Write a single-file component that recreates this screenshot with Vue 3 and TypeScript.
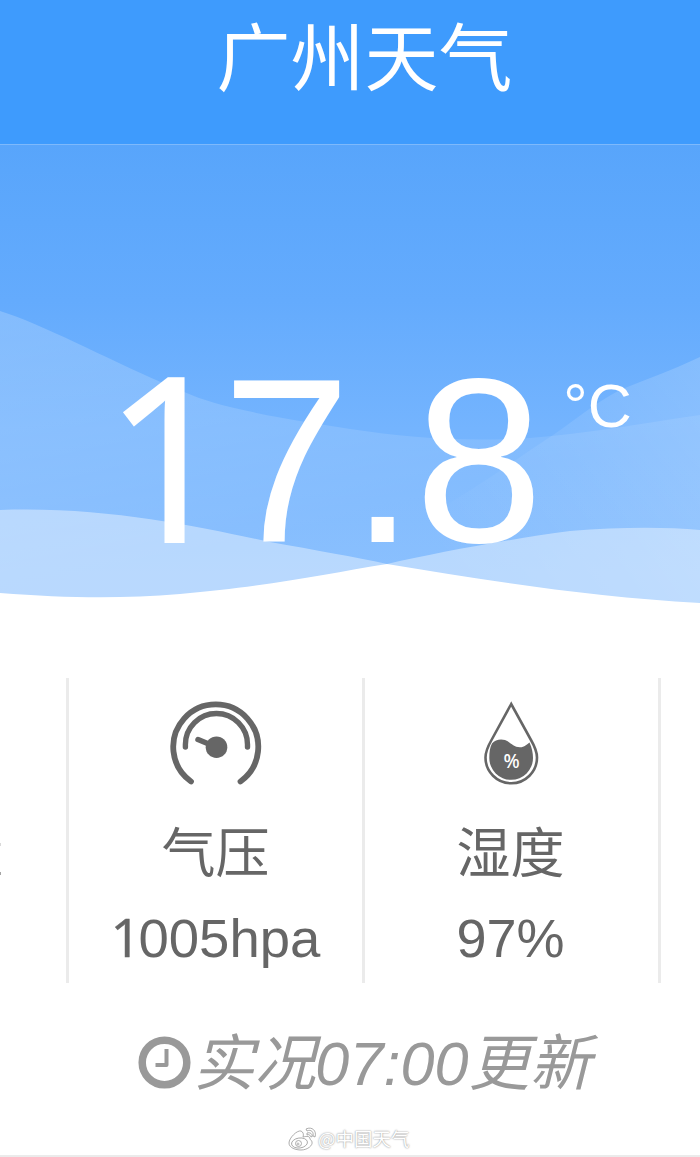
<script setup lang="ts">
interface Metric {
  id: 'pressure' | 'humidity'
  label: string
  lead: string
  value: string
}

const metrics: Metric[] = [
  { id: 'pressure', label: '气压', lead: '1', value: '005hpa' },
  { id: 'humidity', label: '湿度', lead: '', value: '97%' },
]
</script>

<template>
  <main class="page">
    <header class="bar">
      <h1>广州天气</h1>
    </header>

    <section class="hero">
      <svg class="waves" viewBox="0 144 700 476" aria-hidden="true">
        <defs>
          <linearGradient id="left" gradientUnits="userSpaceOnUse" x1="0" y1="311" x2="60" y2="580">
            <stop offset="0" stop-color="#fff" stop-opacity="0.2" />
            <stop offset="0.5" stop-color="#fff" stop-opacity="0.15" />
            <stop offset="1" stop-color="#fff" stop-opacity="0.08" />
          </linearGradient>
          <linearGradient id="right" gradientUnits="userSpaceOnUse" x1="700" y1="357" x2="430" y2="540">
            <stop offset="0" stop-color="#fff" stop-opacity="0.18" />
            <stop offset="0.5" stop-color="#fff" stop-opacity="0.08" />
            <stop offset="1" stop-color="#fff" stop-opacity="0" />
          </linearGradient>
        </defs>
        <path fill="url(#left)" d="M0 311C42 324 105 358 163 383C190 395 208 402 230 407C275 418 315 423 350 429C410 438 465 442 530 438C590 433 645 423 700 415V620H0Z" />
        <path fill="url(#right)" d="M700 357C670 371 645 380 620 390C590 406 570 424 550 437C500 470 440 514 387 535V620H700Z" />
        <path class="crest" d="M0 510C105 506 200 527 270 542C315 550 355 557 387 564L360 620H0Z" />
        <path class="crest" d="M387 564C440 552 510 539 570 531C620 527 665 527 700 530V620H400Z" />
        <path fill="#fff" d="M0 593C65 598 120 599 180 594C265 587 325 574 387 564C490 581 590 597 700 603V621H0Z" />
      </svg>
      <div class="reading">
        <span><span class="one">1</span>7.8</span>
        <span class="unit">°C</span>
      </div>
    </section>

    <section class="metrics">
      <div class="previous">量</div>
      <article v-for="m in metrics" :key="m.id" class="metric" :class="m.id">
        <svg v-if="m.id === 'pressure'" class="icon" viewBox="0 0 130 130" aria-hidden="true">
          <g fill="none" stroke="#666" stroke-linecap="round">
            <path stroke-width="5.8" d="M41 101.5A42.5 42.5 0 1 1 90.5 101.5" />
            <path stroke-width="5.4" d="M35.4 67V64.5A30.8 30.8 0 0 1 97.5 64.5V67" />
            <path stroke-width="5.5" d="M48 59.5L60 64.5" />
          </g>
          <circle cx="66.5" cy="67.2" r="10.8" fill="#666" />
        </svg>
        <svg v-else class="icon" viewBox="0 0 130 130" aria-hidden="true">
          <path fill="none" stroke="#666" stroke-width="2.6" d="M66.200 24L46.500 60C42.500 67 40.500 72 40.500 77.500A25.700 25.700 0 0 0 92 77.500C92 72 90 67 86 60Z" />
          <path fill="#666" d="M47 63.500C50 60 55 58.600 60 60C65.500 62 68 67.300 75 67.300C79.500 67.300 82 64 84.500 62.500C87 68 88 73 88 78A21.800 21.800 0 0 1 44.300 78C44.300 72 45 67 47 63.500Z" />
          <text x="66.500" y="88" text-anchor="middle" class="percent">%</text>
        </svg>
        <h2>{{ m.label }}</h2>
        <p><span v-if="m.lead" class="one">{{ m.lead }}</span>{{ m.value }}</p>
      </article>
      <div class="next"></div>
    </section>

    <section class="updated">
      <svg class="clock" viewBox="0 0 53 53" aria-hidden="true">
        <circle cx="26.500" cy="26.500" r="22.300" fill="none" stroke="#999" stroke-width="7.500" />
        <path fill="none" stroke="#999" stroke-width="4" stroke-linejoin="round" d="M28.500 13V29H17.500" />
      </svg>
      <em>实况07:00更新</em>
    </section>

    <footer>
      <svg class="weibo" viewBox="0 0 30 26" fill="none" stroke="#999" aria-hidden="true">
        <path stroke-width="0.800" d="M13 6C9 5 1 13 1 18C1 23 8 25 13 25C20 25 25 20 24 17C24 15 22 15 22 14C22 11 19 11 15 12C16 9 15 7 13 6Z" />
        <ellipse cx="11.500" cy="18" rx="8" ry="5" stroke-width="0.800" transform="rotate(-8 11.500 18)" />
        <circle cx="10.500" cy="18.500" r="3" stroke-width="0.800" />
        <circle cx="10" cy="19" r="1" stroke-width="0.700" />
        <path stroke-width="0.800" d="M18 4C24 1 29 6 27 12L25 11C26 7 23 4 19 6ZM19 8C22 7 25 9 24 12L22 11C22 10 21 9 19 10Z" />
      </svg>
      <span>@中国天气</span>
    </footer>
  </main>
</template>

<style>
body {
  margin: 0;
}
</style>

<style scoped>
.page {
  width: 700px;
  height: 1157px;
  overflow: hidden;
  display: flex;
  flex-direction: column;
  background: #fff;
  color: #666;
  font-family: "Liberation Sans", "Noto Sans CJK SC", sans-serif;
}

h1, h2, p {
  margin: 0;
}

.bar {
  box-sizing: border-box;
  height: 144px;
  padding-left: 29px;
  background: #3e9bfd;
  color: #fff;
  text-align: center;
}

h1 {
  font: 400 74px/106px "Noto Sans CJK SC", sans-serif;
}

.hero {
  position: relative;
  height: 476px;
  background: linear-gradient(#58a5fb, #64abfd 33%, #74b4fe 60%, #80bafe 90%);
  box-shadow: inset 0 1px #7db9fc;
}

.waves {
  position: absolute;
  inset: 0;
  width: 700px;
  height: 476px;
}

.crest {
  fill: #fff;
  fill-opacity: 0.4;
}

.reading {
  position: relative;
  display: flex;
  padding: 180px 0 0 104px;
  color: #fff;
  font-size: 231px;
  line-height: 274px;
}

.reading > span:first-child {
  transform: scaleY(1.012);
}

.one {
  margin-right: -0.05em;
  font-family: "Open Sans", sans-serif;
  font-size: 0.98em;
  line-height: 0;
  -webkit-text-stroke: 0.009em currentColor;
}

.unit {
  margin: 45px 0 0 20px;
  font-size: 61px;
  line-height: 74px;
}

.metrics {
  display: flex;
  height: 305px;
  margin-top: 58px;
}

.previous {
  box-sizing: border-box;
  width: 66px;
  padding-top: 131px;
  font: 400 54px/80px "Noto Sans CJK SC", sans-serif;
  text-indent: -51px;
  white-space: nowrap;
}

.metric {
  box-sizing: border-box;
  display: flex;
  flex-direction: column;
  align-items: center;
  width: 296px;
  border-left: 3px solid #ebebeb;
}

.humidity {
  padding-right: 2px;
}

.next {
  border-left: 3px solid #ebebeb;
}

.icon {
  width: 130px;
  height: 130px;
  margin: 2px 1px 0 0;
}

.percent {
  font: 500 19px "Noto Sans", sans-serif;
  fill: #fff;
}

h2 {
  font: 400 54px/80px "Noto Sans CJK SC", sans-serif;
}

.metric p {
  margin-top: 17px;
  font-size: 54px;
  line-height: 62px;
}

.metric.pressure p {
  margin-top: 18px;
  font-size: 54.5px;
}

.updated {
  display: flex;
  height: 90px;
  margin-top: 35px;
  padding-left: 138px;
  color: #999;
}

.clock {
  flex: none;
  width: 53px;
  height: 53px;
  margin-top: 18px;
}

em {
  margin-left: 2px;
  font-size: 61.2px;
  line-height: 92px;
  white-space: nowrap;
}

footer {
  display: flex;
  height: 30px;
  margin-top: 17px;
  padding-left: 288px;
  border-bottom: 2px solid #ebebeb;
}

.weibo {
  width: 30px;
  height: 26px;
}

footer span {
  color: #fff;
  font: 400 18.500px/26px "Noto Sans CJK SC", sans-serif;
  text-shadow: 0 0 2px #999, 0 0 1px #bbb;
}
</style>
